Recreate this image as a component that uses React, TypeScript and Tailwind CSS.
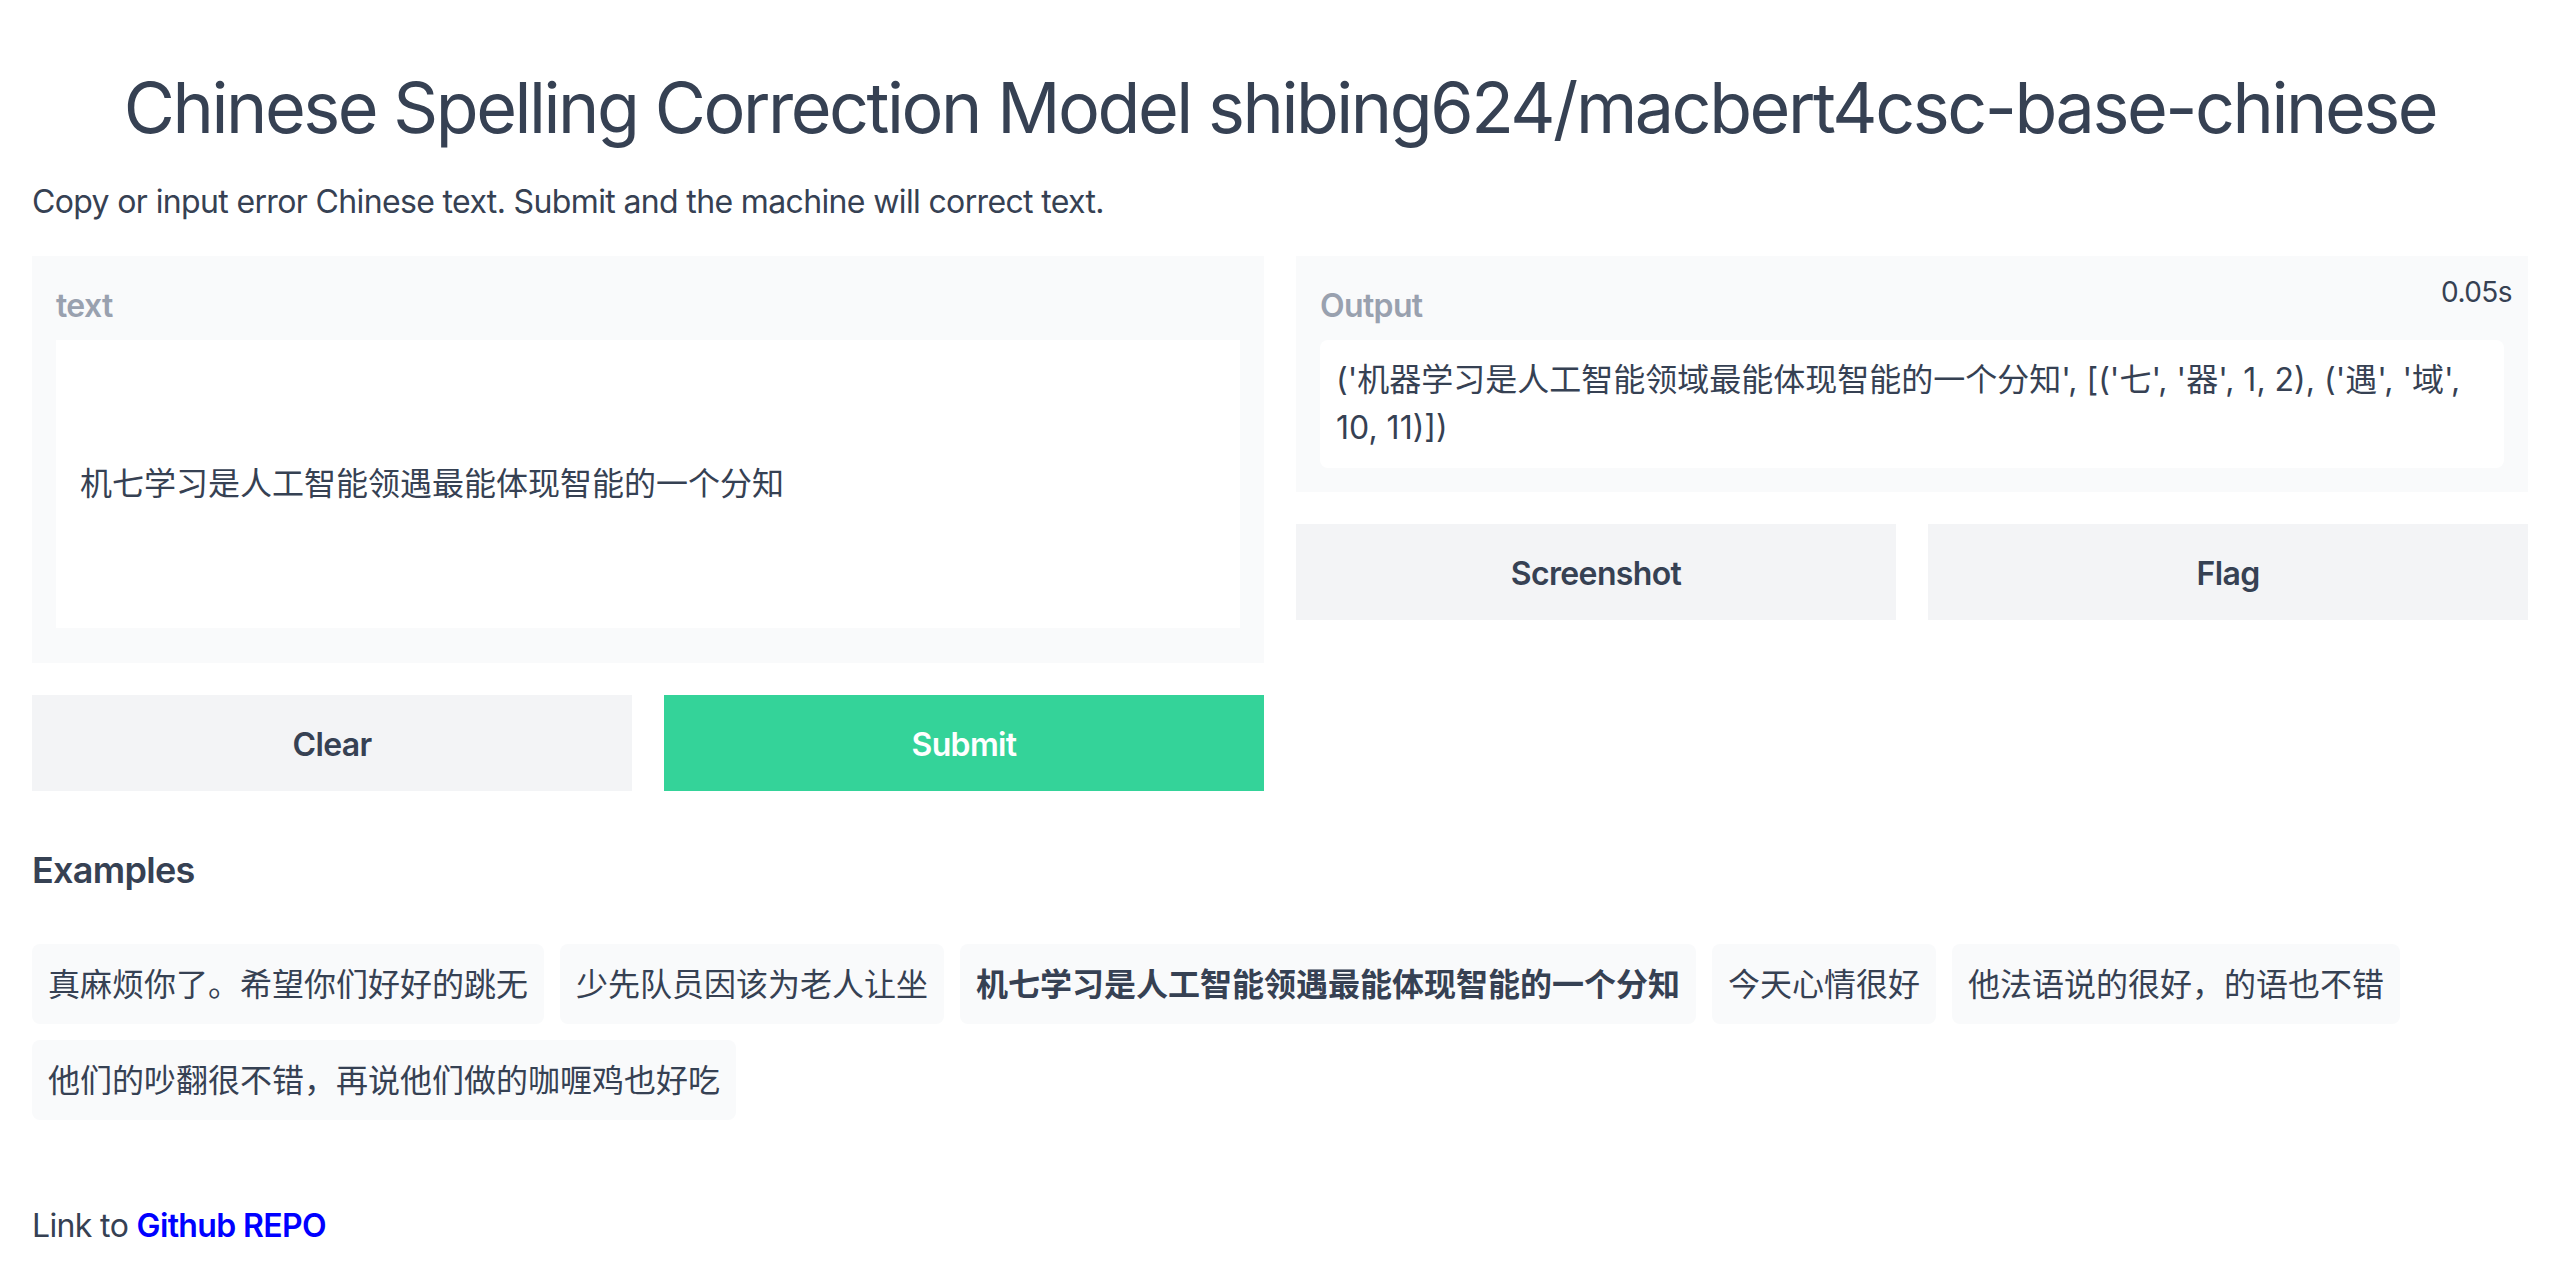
const examples = [
  '真麻烦你了。希望你们好好的跳无',
  '少先队员因该为老人让坐',
  '机七学习是人工智能领遇最能体现智能的一个分知',
  '今天心情很好',
  '他法语说的很好，的语也不错',
  '他们的吵翻很不错，再说他们做的咖喱鸡也好吃',
];

const Button = ({ label, primary }: { label: string; primary?: boolean }) => (
  <button
    type="button"
    className={
      primary
        ? 'h-24 bg-[#34d399] pt-[3px] text-[32px] font-semibold tracking-[-0.02em] text-white'
        : 'h-24 bg-[#f3f4f6] pt-[3px] text-[32px] font-semibold tracking-[-0.02em] text-gray-700'
    }
  >
    {label}
  </button>
);

export default function App() {
  return (
    <div
      className="min-h-screen bg-white px-8 text-gray-700"
      style={{ fontFamily: 'Inter, "Noto Sans CJK SC", sans-serif' }}
    >
      <h1 className="pt-[63px] text-center text-[70px] font-normal leading-[90px] tracking-[-0.035em] whitespace-nowrap">
        Chinese Spelling Correction Model shibing624/macbert4csc-base-chinese
      </h1>
      <p className="mt-[25px] text-[32px] leading-[48px] tracking-[-0.02em]">
        Copy or input error Chinese text. Submit and the machine will correct text.
      </p>

      <div className="mt-[30px] grid grid-cols-2 gap-8">
        <div className="flex flex-col gap-8">
          <div className="bg-[#f9fafb] px-6 pt-6 pb-[35px]">
            <div className="mb-2 text-[32px] font-semibold leading-[52px] tracking-[-0.02em] text-gray-400">
              text
            </div>
            <div className="flex h-[288px] items-center bg-white px-6 text-[32px] leading-[48px]">
              机七学习是人工智能领遇最能体现智能的一个分知
            </div>
          </div>
          <div className="grid grid-cols-2 gap-8">
            <Button label="Clear" />
            <Button label="Submit" primary />
          </div>
        </div>

        <div className="flex flex-col gap-8 self-start">
          <div className="relative bg-[#f9fafb] px-6 pt-6 pb-6">
            <span className="absolute right-4 top-5 text-[28px] leading-8 tracking-[-0.02em] text-gray-700">
              0.05s
            </span>
            <div className="mb-2 text-[32px] font-semibold leading-[52px] tracking-[-0.02em] text-gray-400">
              Output
            </div>
            <div className="rounded-lg bg-white px-4 py-4 text-[32px] leading-[48px]">
              <span className="block whitespace-nowrap">
                ('机器学习是人工智能领域最能体现智能的一个分知', [('七', '器', 1, 2), ('遇', '域',
              </span>
              <span className="block">10, 11)])</span>
            </div>
          </div>
          <div className="grid grid-cols-2 gap-8">
            <Button label="Screenshot" />
            <Button label="Flag" />
          </div>
        </div>
      </div>

      <h2 className="mt-[52px] text-[36px] font-semibold leading-[54px] tracking-[-0.02em]">Examples</h2>
      <div className="mt-[47px] flex flex-wrap gap-4">
        {examples.map((ex, i) => (
          <button
            key={ex}
            type="button"
            className={
              i === 2
                ? 'rounded-lg bg-[#f9fafb] px-4 pt-[17px] pb-[15px] text-[32px] font-bold leading-[48px]'
                : 'rounded-lg bg-[#f9fafb] px-4 pt-[17px] pb-[15px] text-[32px] leading-[48px]'
            }
          >
            {ex}
          </button>
        ))}
      </div>

      <p className="mt-[82px] pb-8 text-[32px] leading-[48px] tracking-[-0.02em]">
        Link to{' '}
        <a href="#" className="font-semibold text-[#0000ff]">
          Github REPO
        </a>
      </p>
    </div>
  );
}
